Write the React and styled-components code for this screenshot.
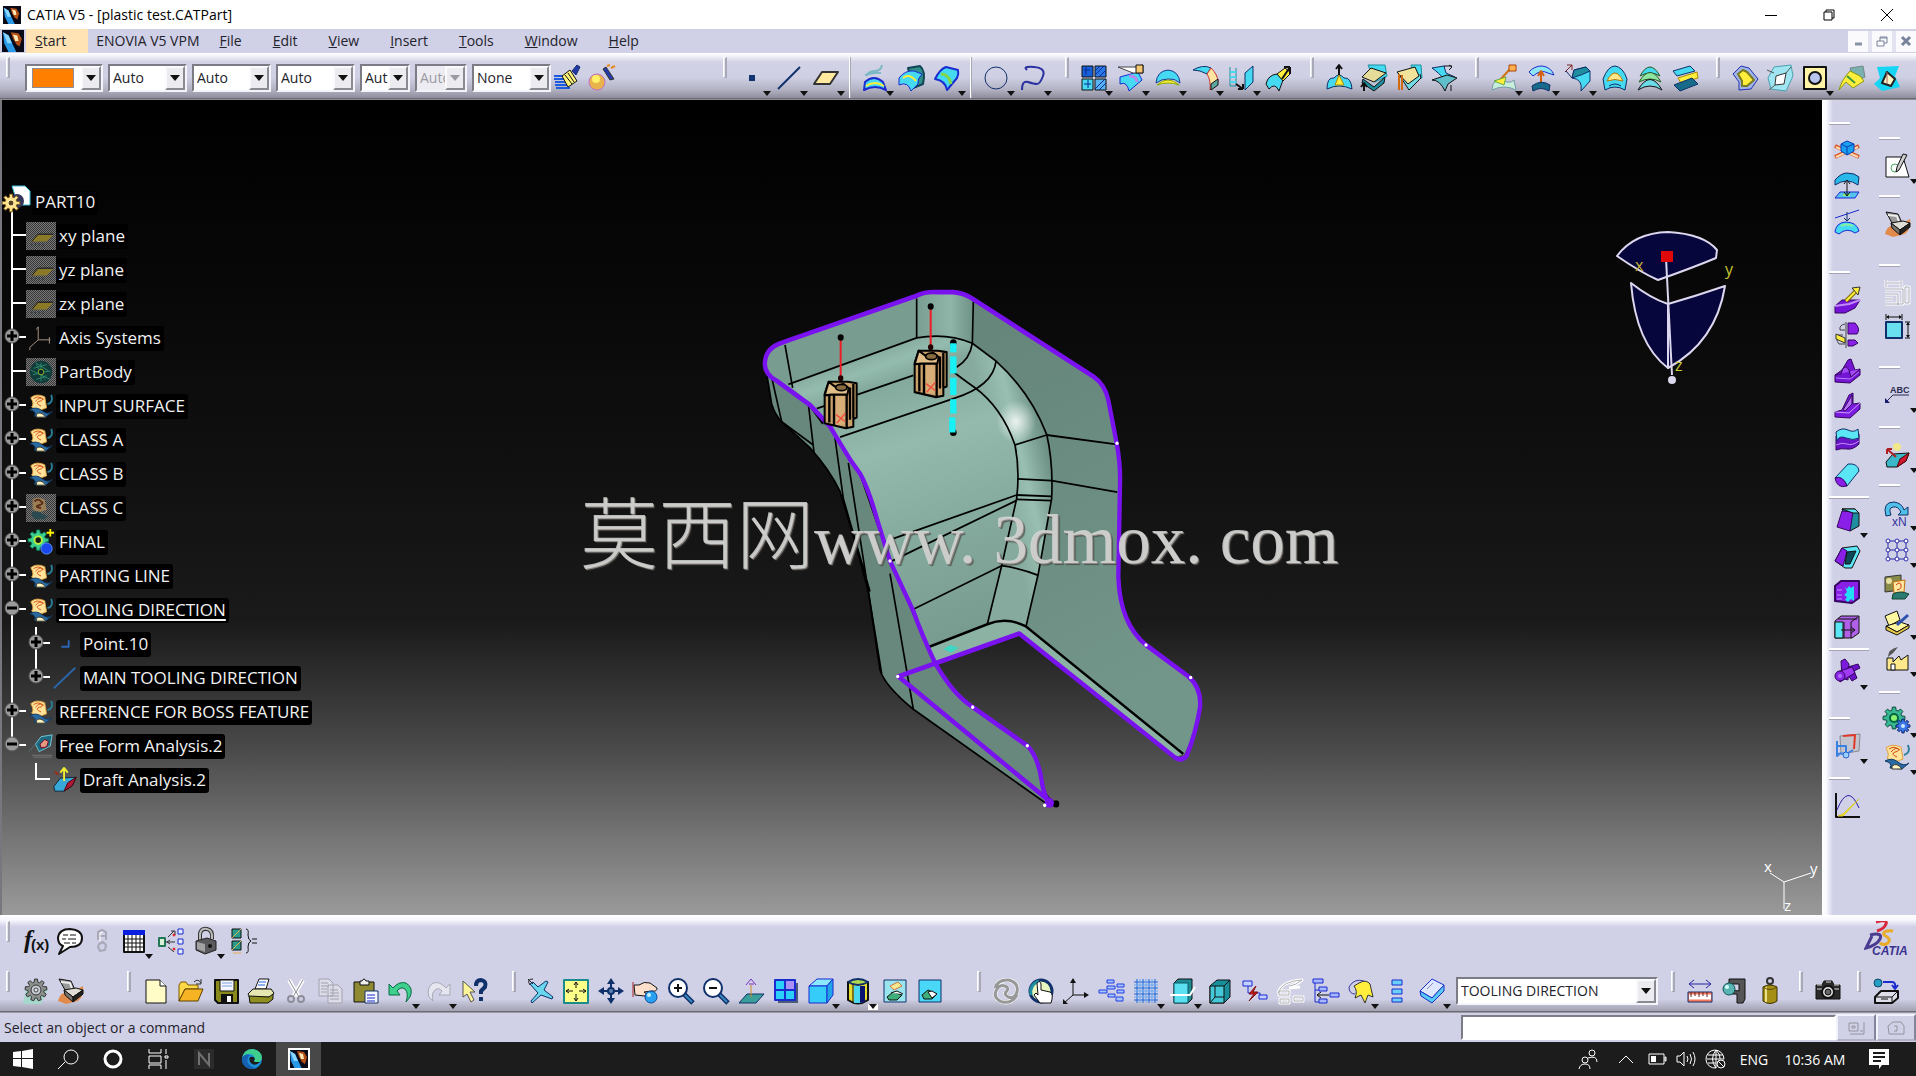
import React from "react";
import styled, { createGlobalStyle, css } from "styled-components";

const GlobalStyle = createGlobalStyle`
  *, *::before, *::after { box-sizing: border-box; }
  html, body { margin: 0; padding: 0; background: #1c1c1c; }
  body { font-family: "Open Sans", "Noto Sans", sans-serif; font-size: 14px; color: #23232b; overflow: hidden; }
  button, select, input { font: inherit; color: inherit; border-radius: 0; }
`;

const LAV = "#d0d0e7";

/* ---------- icon drawings: [path, fill, stroke, stroke width] on a 28 x 28 grid ---------- */
const c = (x, y, r) => `M${x - r} ${y}a${r} ${r} 0 1 0 ${2 * r} 0a${r} ${r} 0 1 0 ${-2 * r} 0Z`;
const r = (x, y, w, h) => `M${x} ${y}h${w}v${h}h${-w}Z`;
const gearPath = (cx, cy, outer, inner, teeth) => {
  const pts = [];
  for (let i = 0; i < teeth; i++) {
    [[-0.34, inner], [-0.2, outer], [0.2, outer], [0.34, inner]].forEach(([o, rad]) => {
      const a = ((i + o) / teeth) * Math.PI * 2;
      pts.push(`${(cx + Math.sin(a) * rad).toFixed(1)} ${(cy - Math.cos(a) * rad).toFixed(1)}`);
    });
  }
  return `M${pts.join("L")}Z`;
};
const N = "none";
const CY = "#45d9f2", BL = "#1a2bd0", NV = "#10306a", YE = "#ffee3c", PU = "#8a20e8", TE = "#1f8f9f", K = "#111111";

const geoset = [
  ["M3 5Q9 0 18 4L20 16Q10 21 4 15Q7 12 3 5Z", "#ffe39a", "#e0a040", 1],
  ["M6 6Q10 3 14 5Q18 8 12 9Q7 11 14 14M8 9Q13 3 17 7", N, "#d24a10", 1],
  ["M2 18Q9 14 15 19T26 20L19 26L7 25Q10 20 2 18Z", "#2b6aa0", "#123a66", 1],
  ["M9 23Q14 19 19 26L9 26Z", "#fff6c0", "#333", 1],
  ["M25 2Q28 10 21 12", N, "#2a7f9a", 2],
];

const ICONS = {
  brush: [["M1 12h10M1 15h11M2 18h12M2 21h14M3 24h14", N, "#1a5be0", 2], ["M9 12L17 6L24 17L15 23Z", "#fff37a", K, 1], ["M12 11L19 20M15 9L21 18", N, K, 1], ["M19 7L24 1L27 3L23 11Z", "#2438a8", NV, 1]],
  wizard: [[c(9, 18, 8), "#e9b34c", "#c070c8", 1], [c(8, 15, 4), "#fff06a"], ["M15 5L18 3L26 15L22 16Z", "#2438a8", "#333", 1], ["M19 2L22 1M23 4L27 2", N, "#e88820", 2]],
  point: [[r(11, 11, 6, 6), "#12356f"]],
  line: [["M3 25L25 3", N, NV, 2]],
  plane: [["M2 20L10 8H26L18 20Z", "#ffeaa0", "#333", 2]],
  extrude: [["M4 11Q14 8 20 9M21 1Q20 7 14 7T5 12", N, "#7ab8c4", 2], ["M4 18Q13 10 22 18L25 26Q14 20 3 26Z", CY, BL, 2], ["M5 22Q14 16 23 22", N, YE, 2]],
  offset: [["M10 4L22 2Q28 7 25 20L15 24Z", "#2f8f8a", "#145", 2], ["M1 14Q7 6 16 7L24 10Q19 15 20 20L13 27Q10 17 1 21Z", CY, BL, 1], ["M5 14Q11 9 18 17", N, YE, 2]],
  sweep: [["M2 15Q7 5 13 3L25 6Q26 10 24 14L14 26Q13 17 2 15Z", CY, BL, 2], ["M8 10Q16 10 18 20", N, "#7ed84a", 3]],
  circle: [[c(14, 14, 11), N, NV, 1]],
  spline: [["M3 26Q3 16 9 18T18 20T24 12T15 3T8 6", N, "#2a30a0", 2]],
  join: [[r(2, 2, 11, 11), "#1560d8", K, 1], [r(15, 2, 11, 11), "#2a78e8", K, 1], [r(2, 15, 11, 11), CY, K, 1], [r(15, 15, 11, 11), "#58b4f0", K, 1], ["M15 11L24 2M15 7L20 2M19 13L26 6M15 25L25 15M19 26L26 19M4 6h6M6 3v8M4 20h7M8 16v8", N, "#0a2a90", 1]],
  split: [["M3 13L21 8Q24 14 25 16L12 27Q10 17 3 20Z", CY, BL, 1], ["M12 12Q20 12 20 18", N, "#b58af0", 3], ["M1 3H18L26 1V9H16Z", "#fff", "#444", 1], [r(19, 1, 7, 8), "#f4c870", K, 1]],
  trim: [["M2 19Q3 7 14 6Q25 7 26 19Q21 14 14 15Q7 15 2 19Z", CY, "#1a3a90", 1], ["M3 21Q14 11 25 21Q14 17 3 21Z", YE, "#8a0", 1]],
  fillet: [["M2 6Q12 0 20 4L16 10Q9 6 2 6Z", CY, NV, 1], ["M16 10L20 4Q27 11 27 18L19 26Q20 16 16 10Z", "#ffe6a0", "#c33", 1], ["M20 26V20L27 15V21Z", "#5aa8a0", K, 1]],
  translate: [["M2 3V22H8V4", N, TE, 1], ["M2 8h6M2 13h6M2 18h6", N, CY, 2], ["M8 20L15 25M15 25v-5M15 25h-5", N, K, 2], ["M17 9L25 2V18L17 26Z", CY, NV, 1]],
  extrapol: [["M1 20Q3 11 12 10L18 16L14 27Q10 18 4 25Z", CY, K, 1], ["M12 10L20 4L26 9L18 17Z", YE, K, 1], ["M17 15L25 3M25 3v7M25 3h-6", N, K, 2]],
  bump: [["M2 25Q2 13 9 14Q14 8 19 14Q26 13 27 25Q14 19 2 25Z", CY, NV, 1], ["M10 21L14 11L19 21Z", YE, "#a80", 1], ["M14 11V2M11 5L14 1L17 5", N, K, 2]],
  wrapA: [["M8 1H25L27 12L15 18Z", CY, TE, 1], ["M3 15L14 23L25 13L24 19L14 27L2 19Z", TE, K, 1], ["M2 13L11 4L26 9L14 18Z", "#e6dc9a", K, 1], ["M4 27V20M1 23L4 19L7 23", N, K, 2]],
  wrapB: [["M16 1H26L27 14L18 15Z", CY, TE, 1], ["M3 9L14 26L26 14L25 10", "#73dbe6", K, 1], ["M2 8L20 3L24 12L13 20Z", "#f3e39a", K, 1], ["M4 26V10M7 26V11", N, "#d06a10", 2]],
  wrapC: [["M2 4L14 2L16 9L25 13L17 18Q8 8 2 4Z", CY, NV, 1], ["M2 16L17 11L27 14L18 20L15 27Q10 16 2 16Z", "#5fbfcb", K, 1], ["M14 2H22M19 1L22 3L19 6M21 21V27", N, K, 1]],
  devA: [["M10 16L20 5", N, "#d07010", 2], [r(19, 1, 7, 6), "#ffb050", "#a40", 1], ["M3 20Q8 14 14 17T24 16L26 26Q14 20 2 26Z", "#c6eeda", "#79a", 1], ["M4 17L16 13L14 21Z", YE, "#6a4", 1]],
  devB: [["M2 8Q7 2 15 2Q24 3 27 11L21 9Q14 5 6 12Z", "#8fe6f6", BL, 1], ["M14 20V8M11 12L14 7L17 12", N, "#d2600e", 2], ["M5 22Q14 15 23 21L22 27Q14 22 6 27Z", "#176a8a", NV, 1]],
  devC: [["M10 6L22 3L26 7V17L17 27Q19 15 8 14Z", CY, NV, 1], ["M10 6L22 3L26 7Q18 11 8 14Z", TE, NV, 1], ["M1 8L8 1M8 1v5M8 1h-5", N, "#7a2020", 1], ["M2 7L8 14", N, NV, 1]],
  devD: [["M2 15Q7 2 14 2Q22 3 26 15L24 26Q14 20 4 26Z", CY, NV, 1], ["M6 17Q14 1 22 17Q14 14 6 17Z", "#ffe68a", "#b70", 1], ["M8 22Q14 18 20 22", N, NV, 1]],
  devE: [["M4 12Q14 -6 24 12Q14 6 4 12Z", CY, "#255a20", 1], ["M3 18Q14 -1 25 18Q14 12 3 18Z", "#8fe6a0", "#255a20", 1], ["M2 26Q14 5 26 26Q14 18 2 26Z", "#6cdbe8", K, 1]],
  devF: [["M2 7L19 2L24 7L6 12Z", CY, NV, 1], ["M7 14L26 8L27 14L10 19Z", YE, "#a80", 1], ["M3 21L21 14L27 20L9 27Z", "#176a8a", NV, 1]],
  hiA: [["M2 10L10 2L18 4L27 15L20 25L8 26L8 18Z", "#9fb4e6", "#2430b0", 1], ["M7 10L12 6L16 8L23 16L16 22L11 22V17Z", YE, "#7a7a20", 2]],
  hiB: [["M8 3L25 1L27 12L20 27L5 25L2 14Z", "#9fe6f2", "#4aa0b0", 1], ["M10 12L20 9L18 20L9 21Z", "#fff", "#333", 1], ["M1 6L8 9M25 3L20 9M3 26L9 21", N, "#555", 1]],
  hiC: [[r(3, 3, 22, 22), "#fff3a8", K, 2], [c(14, 14, 6), "#b8c4ee", K, 2]],
  hiD: [["M12 4L25 2L27 13L16 18Z", "#7ab0b0", "#788", 1], ["M1 26Q4 15 12 7L22 12L26 17L15 24L8 18Z", YE, "#8a9a10", 1], ["M9 12L17 19", N, "#3a9a40", 2]],
  hiE: [["M4 3L26 2L22 12L27 23L9 27L1 20L7 14Z", "#15d5f4"], ["M14 8L22 15L18 22L9 19Z", "#fff6c8", "#222", 2], ["M14 8V20", N, "#a66", 1]],
  bubble: [["M14 2Q26 3 26 11Q26 20 14 20L3 27L7 19Q2 17 2 11Q3 2 14 2Z", "#fff", K, 2], ["M7 8h5M14 8h6M6 12h4M12 12h8M8 16h6M16 16h4", N, K, 1]],
  ghost8: [["M10 13V5L14 3L18 5V13M10 9H18M11 17L15 15L18 18L17 23L12 24L10 20Z", N, "#a9a9b8", 2], ["M12 14V6L15 5", N, "#fff", 1]],
  table: [[r(4, 4, 20, 21), "#fff", K, 2], [r(3, 3, 22, 5), "#0a1ee0"], ["M4 12H24M4 16H24M4 20H24M8 8V25M12 8V25M16 8V25M20 8V25", N, K, 1]],
  links: [[r(2, 11, 6, 8), "#d8f0d8", "#275", 2], ["M8 15H18M11 10L17 4M11 20L17 25M13 13L10 15L13 17M14 4h4v4", N, "#333", 1], [r(21, 2, 5, 5) + r(21, 12, 5, 5) + r(21, 22, 5, 5), "#e6ecff", BL, 1], [c(17, 8, 1) + c(17, 22, 1), "#e02020", "#e02020", 1]],
  lock: [["M8 13V7Q9 1 15 2Q21 3 20 12", N, "#333", 4], ["M8 13V7Q9 1 15 2Q21 3 20 12", N, "#bbb", 2], ["M4 14L15 11L24 14V23L13 27L4 23Z", "#59595e", "#222", 1], ["M5 15L13 17V25L5 22Z", "#a2a2a2"], [c(18, 19, 2), "#111"]],
  formula: [[r(3, 2, 9, 9) + r(3, 14, 9, 9), "#2a9a8a", K, 1], ["M3 11L12 2M3 23L12 14M4 26h8", N, "#e0b050", 1], ["M17 2Q20 2 19 8Q19 13 22 14Q19 15 19 20Q20 26 17 26", N, K, 1], ["M23 12h5M23 16h5", N, K, 1]],
  gear: [["M5 12H27L20 27H2Z", "#a7d8cc"], [gearPath(15, 13, 11, 8, 9), "#8c918f", "#333", 1], [c(15, 13, 5), "#c6ccd2", "#333", 1], [c(15, 13, 2), "#e6e6f0", "#444", 1]],
  sandwich: [["M2 24Q5 13 12 17L27 9Q29 18 22 24L10 27Z", "#e08a4c"], ["M3 2L15 4L20 15L9 13Z", "#999", K, 1], ["M5 5L14 6L16 12", N, "#eee", 2], ["M8 13L20 11L27 13L17 20Z", "#e0dcd6", K, 1], ["M8 13L17 20V25L9 18Z", "#77736e", K, 1], ["M17 20L27 13V17L17 25Z", "#222", K, 1]],
  newdoc: [["M4 3H18L24 9V26H4Z", "#fffcc8", K, 1], ["M18 3V9H24", "#fff", K, 1]],
  open: [["M2 8L4 5H9L11 8H21V12H8L2 24Z", "#ffd848", "#7a5a00", 1], ["M2 24L8 12H26L21 24Z", "#f6b424", "#5a4000", 1], ["M17 5Q21 1 24 6M24 2V7H19", N, "#333", 1]],
  save: [["M3 3H26V26H6L3 23Z", "#8a8a1c", K, 2], [r(8, 3, 14, 11), "#f4f6ff", K, 1], ["M10 6h10M10 9h10", N, "#7aa0e0", 1], [r(9, 17, 12, 9), K], [r(15, 19, 4, 6), "#fff"]],
  print: [["M8 12L12 2H22L19 12Z", "#fff", K, 1], ["M12 5h7M11 8h7", N, "#1a60e0", 1], ["M1 17L6 12H24L27 16L24 20L3 21Z", "#e6e6b0", K, 1], ["M2 19L22 20L26 17V22L21 26H3Z", "#8f8f22", K, 1]],
  cut: [["M7 3L17 20M21 3L11 20", N, "#fff", 4], ["M7 3L17 20M21 3L11 20", N, "#8e8e9a", 1], [c(9, 22, 3) + c(19, 22, 3), N, "#8e8e9a", 2]],
  copy: [["M2 2H12L16 6V19H2ZM11 8H21L25 12V26H11Z", "#dcdce8", "#a2a2b0", 1], ["M4 6h7M4 9h8M4 12h6M4 15h6M13 13h8M13 16h9M13 19h9M13 22h9", N, "#a2a2b0", 1]],
  paste: [[r(2, 5, 20, 20), "#8f8a32", K, 1], ["M8 8V4H10Q12 0 14 4H17V8Z", "#eee", K, 1], [r(13, 14, 13, 12), "#f6f8ff", NV, 1], ["M15 18h8M15 21h8M15 24h8", N, BL, 1]],
  undo: [["M2 18V7L6 11Q12 4 19 6Q27 11 23 20L19 25Q22 16 18 12Q14 9 10 14L13 18Z", "#3fd08e", "#0d6a46", 1]],
  redo: [["M26 18V7L22 11Q16 4 9 6Q2 11 5 20L9 24Q7 16 11 13Q15 10 18 14L15 18Z", "#e6e6f0", "#a9a9b6", 1]],
  help: [["M2 4L14 15H9L13 23L10 25L6 17L2 20Z", "#fff69a", "#555", 1], ["M15 9Q15 3 20 3Q26 4 24 10L20 14V17M20 20V24", N, NV, 4]],
  fly: [["M3 7L6 5L11 10L19 4L21 5L17 13L26 20L25 22L14 18L5 26L4 24L11 16Z", "#69d8ee", NV, 1], ["M3 8Q-1 2 6 2M1 2L6 7", N, "#222", 1]],
  fit: [[r(2, 3, 24, 23), "#fcff88", "#1a8a8a", 2], ["M14 5V11M14 17V24M4 14H11M17 14H24M12 8L14 5L16 8M12 21L14 24L16 21M7 12L4 14L7 16M21 12L24 14L21 16", N, K, 1]],
  pan: [["M14 3V25M3 14H25", N, NV, 2], ["M10 7L14 1L18 7ZM10 21L14 27L18 21ZM7 10L1 14L7 18ZM21 10L27 14L21 18Z", NV], [c(14, 14, 3), "#5a80b0", NV, 2]],
  rotate: [["M2 8H7Q12 4 18 6L25 11Q25 15 20 14L12 15Q17 18 13 19L3 18Z", "#fde0cc", K, 1], [c(19, 20, 6), "#2aa0f0", "#0a4a9a", 1], [c(17, 18, 2), "#c8f0ff"], ["M1 5V20", N, "#a22", 1]],
  zoomin: [["M16 16L26 26", N, NV, 5], ["M17 17L25 25", N, "#3a8ac0", 2], [c(11, 11, 9), "#fff", NV, 2], ["M11 7V15M7 11H15", N, K, 2]],
  zoomout: [["M16 16L26 26", N, NV, 5], ["M17 17L25 25", N, "#3a8ac0", 2], [c(11, 11, 9), "#fff", NV, 2], ["M7 11H15", N, K, 2]],
  normal: [["M2 26L10 17H27L19 26Z", "#3a9f9a", NV, 1], ["M14 20V8", N, "#d08a20", 1], ["M9 8L14 2L19 8M12 7h5", N, "#7a30c0", 1]],
  quad: [[r(6, 6, 20, 20), "#4a5a78"], [r(3, 3, 20, 20), "#2ad0f8", BL, 2], ["M13 3V23M3 13H23", N, BL, 2], [r(14, 4, 8, 8), "#a890f4"]],
  cube: [["M2 9L10 2H26L20 9Z", "#8ae8ff", BL, 1], ["M2 9H20V26H2Z", "#36ccfa", BL, 1], ["M20 9L26 2V18L20 26Z", "#22a4e8", BL, 1]],
  cylinder: [["M4 5V23Q14 30 24 23V5Z", "#e8dc30", K, 2], ["M10 9H18V26H10Z", "#49d8f0"], ["M16 9H21V25L16 26Z", "#0a1470"], ["M4 5Q14 -1 24 5Q14 11 4 5Z", "#b0d850", NV, 2], ["M4 5V23M9 8V25", N, K, 1]],
  hideA: [[r(3, 3, 22, 22), "#9ae4ee", NV, 1], ["M6 20L12 15L21 18L16 23H8Z", "#3fae7a", K, 1], ["M9 9L17 5L21 9L13 13Z", "#f6e890", "#c74", 1], ["M10 16L16 14L22 17", "#fff", K, 1]],
  hideB: [[r(3, 3, 22, 22), "#4ad8f8", NV, 1], ["M6 18L12 13L21 17L16 22H8Z", "#3fae7a", K, 1], ["M12 15L16 14L21 17L16 21Z", "#fff", K, 1]],
  swirl: [["M3 11Q6 2 17 3Q27 6 25 15Q23 22 16 20Q11 17 15 14M25 18Q20 27 10 25Q1 21 4 14Q7 7 13 9Q18 11 14 15", N, "#fff", 4], ["M3 11Q6 2 17 3Q27 6 25 15Q23 22 16 20Q11 17 15 14M25 18Q20 27 10 25Q1 21 4 14Q7 7 13 9Q18 11 14 15", N, "#989898", 3]],
  manual: [[c(14, 14, 11), "#e8f6c0", NV, 3], ["M4 18Q2 8 12 4", N, TE, 3], ["M10 6Q13 3 14 7V13L23 15Q27 17 24 26H13L7 18L9 16L11 18Z", "#fff", K, 1]],
  axis: [["M11 18V3M11 18H25M11 18L2 26", N, K, 1], ["M8 6L11 1L14 6ZM22 15L27 18L22 21ZM1 22L1 27L6 27Z", K]],
  boxes: [[r(2, 13, 8, 3) + r(10, 3, 7, 3) + r(10, 9, 8, 3) + r(11, 17, 7, 3) + r(20, 7, 7, 3) + r(20, 13, 7, 3) + r(19, 20, 7, 4), "#a8c4ff", "#1e3ee0", 1]],
  grid: [["M2 5H26M2 11H26M2 17H26M2 23H26M5 2V26M11 2V26M17 2V26M23 2V26", N, "#1a66d8", 1], ["M2 8H26M2 14H26M2 20H26M8 2V26M14 2V26M20 2V26", N, "#68a8f0", 1]],
  cutpart: [["M5 6L9 2H23V22L19 26H5Z", "#1d8a94", K, 1], [r(5, 6, 14, 20), "#5ae0f0", "#0a5a66", 1], ["M1 18H21L26 10", N, "#fff", 2]],
  cubeB: [["M4 9L11 3H24V20L18 26H4Z", "#1a8f9c", K, 1], [r(4, 9, 14, 17), "#45c8d8", K, 1], ["M9 9V20H18M9 20L4 26", N, K, 1], ["M18 9L24 3", N, K, 1]],
  linkcut: [["M7 9V16H19V19", N, BL, 1], [r(2, 4, 9, 5) + r(18, 18, 8, 4), "#c4d0ff", BL, 1], ["M15 9L8 17H13L8 24L17 15H12Z", "#c81818", "#801010", 1]],
  ghostlist: [["M2 16Q6 4 26 3Q20 8 14 9M3 14H13V18H3ZM4 22H13V26H4ZM18 20H27V24H18ZM13 11L24 10", N, "#fff", 3], ["M2 16Q6 4 26 3Q20 8 14 9M3 14H13V18H3ZM4 22H13V26H4ZM18 20H27V24H18Z", N, "#b0b0b4", 1]],
  treeicon: [["M4 5V25H8M4 13H10", N, BL, 1], [r(2, 2, 10, 4) + r(8, 10, 8, 4) + r(8, 22, 8, 4) + r(19, 16, 9, 4), "#a8b8ff", BL, 1], ["M6 18H18M10 15L6 18L10 21", N, K, 1]],
  star: [["M3 10Q8 1 18 4", N, "#3838a0", 1], ["M3 10Q3 17 9 17", N, "#3838a0", 1], ["M8 9L13 6Q20 2 24 7L27 20L22 18L19 26L15 18L9 21Q12 14 8 9Z", YE, "#333", 1]],
  stack: [[r(9, 3, 10, 5) + r(9, 12, 10, 5) + r(9, 21, 10, 4), "#6ad0f8", BL, 1]],
  layer: [["M2 14L14 2L26 8L14 21Z", "#dfe6ff", "#1a30c8", 1], ["M2 14L14 21L26 8V14L14 26L3 19Z", "#58c8f4", "#1a30c8", 1], ["M9 12L15 6", N, "#88a", 1]],
  ruler: [["M4 7H24M8 3L3 7L8 11M20 3L25 7L20 11", N, "#2424a0", 1], [r(2, 15, 24, 10), "#f87a5a", NV, 1], ["M3 20H25", N, "#fff", 5], ["M5 15V20M9 15V19M13 15V20M17 15V19M21 15V20", N, "#602020", 1]],
  caliper: [["M8 2H24V22L22 26H16V17H9V13L18 14V7H8Z", "#555", K, 1], [c(8, 12, 6), "#5ab4b4", "#155", 1], [c(6, 10, 2), "#d6fff8"]],
  weight: [[c(14, 4, 3), N, "#333", 2], ["M7 10Q14 6 21 10V24Q14 29 7 24Z", "#a58f14", "#3a3000", 1], ["M10 10V25", N, "#ece088", 2], ["M7 10Q14 15 21 10", N, "#5a4a00", 1]],
  camera: [["M2 8H8L10 4H18L20 8H26V22H2Z", "#2a2a2a", K, 1], ["M3 12h6M19 12h6M3 8h5M20 8h5M12 5h5", N, "#ddd", 1], [c(14, 15, 6), "#ddd", K, 2], [c(14, 15, 3), "#666", K, 1]],
  catalogue: [[c(6, 6, 4), "#25a0c4", "#146", 1], ["M11 5H20Q24 5 23 11M20 8L23 12L26 8", N, BL, 2], ["M3 20L9 14H26V21L20 26H3Z", "#dedeea", K, 2], ["M3 20H20V26M20 20L26 14M9 22h7", N, K, 1]],
  // right-hand panel
  mechA: [["M2 9L26 20M26 9L2 20", N, "#d85020", 4], ["M3 10L25 20M25 10L3 20", N, "#ffd9b0", 2], ["M8 7L14 4L21 7V14L14 18L8 14Z", "#1aa0f0", "#0a3ab0", 1], ["M8 7L14 10L21 7M14 10V18", N, "#0a3ab0", 1]],
  mechB: [["M2 8Q8 1 14 1Q22 1 26 5L25 13Q14 5 2 13Z", "#29b8ea", NV, 1], ["M2 26L7 20H26L22 26Z", "#54c4ee", BL, 1], [r(10, 22, 7, 2), "#8af070"], ["M14 23V10M11 12L14 8L17 12M11 20L14 24L17 20", N, K, 1]],
  mechC: [["M2 11L26 3", N, BL, 1], ["M14 5V13M11 11L14 14L17 11", N, NV, 1], ["M2 25Q3 16 12 15Q24 15 26 24L22 26Q14 20 6 27Z", CY, BL, 1], ["M8 19Q14 16 20 19", N, "#8af0a0", 2]],
  pad: [["M2 20L9 14H27L22 22L12 27H2Z", "#7512d8", "#35065f", 1], ["M2 20L16 18L27 14", N, "#c08af8", 2], ["M13 15L23 5", N, "#7a6a00", 4], ["M13 15L23 5", N, YE, 2], ["M19 2L27 1L25 9Z", YE, "#333", 1]],
  shaft: [["M15 2H22Q28 8 24 13H15ZM15 19H22L25 22L20 25H15Z", PU, "#35065f", 1], ["M12 3Q6 4 7 9H12M10 14H5Q2 18 6 23H12M13 1V27", N, "#444", 1], ["M3 13L12 17V22L3 18Z", YE, "#333", 1]],
  rib: [["M2 19L9 14L15 4L18 3L22 14L27 13V19L17 27L2 26Z", "#7414d4", "#35065f", 1], ["M2 19L8 18Q11 6 16 14L18 21L27 13", "#a24af4", "#35065f", 1], ["M3 22L17 23L26 16", N, "#b880ff", 1]],
  stiff: [["M2 21L9 19L16 4L20 2V13L27 12V18L17 27L2 26Z", "#7a1ade", "#35065f", 1], ["M10 19L19 4V13L12 20Z", "#b570f6", "#35065f", 1], ["M2 21L16 22L27 12", N, "#c89aff", 1]],
  thick: [["M3 10Q8 6 14 9T26 8V18Q20 24 14 23T3 24Z", "#6a14c8", "#35065f", 1], ["M3 6Q9 1 15 4T25 3L26 12Q20 15 13 12T4 15Z", "#5ae6f4", NV, 1], ["M3 19Q9 16 14 18T26 15", N, "#c090ff", 1]],
  thickB: [["M2 17L15 3Q25 2 26 10L14 25Q12 17 2 17Z", "#5ae6f4", NV, 1], ["M2 17Q10 14 14 25Q4 28 2 17Z", PU, "#35065f", 1]],
  draft: [["M9 3L22 3L26 7V20L17 25Z", TE, K, 1], ["M9 5L20 6L17 25L4 21Z", PU, "#35065f", 1], ["M9 3L22 3L26 7L20 7Z", "#5ae6f4", K, 1]],
  shell: [["M9 5L24 3L27 8L19 25H12L2 18Z", "#5ae6f4", K, 1], ["M2 18L9 5L14 8L10 23Z", PU, "#35065f", 1], ["M14 9L23 8L17 21H12Z", "#0c4a5a", K, 1]],
  thickC: [["M2 8L8 3H26V20L19 25L2 23Z", PU, "#35065f", 2], ["M12 9L14 11L16 8L18 10L21 8V23L18 21L15 24L12 22L14 19L11 17L14 14Z", "#20dff4"], ["M4 12h5M4 17h5M4 21h5", N, "#c090ff", 1]],
  replace: [["M2 8L8 3H26V20L19 25L2 25Z", "#b060e8", K, 1], [r(2, 9, 8, 16), "#5ae6f4", K, 1], ["M11 9V25M18 9V25M18 9L25 4M5 6H24", N, K, 1], ["M8 17H22M18 14L22 17L18 20", N, K, 1]],
  boolean: [["M8 3L12 1L16 6L15 22L9 20Z", "#7d1ae0", "#35065f", 1], ["M15 9L25 6L27 10L21 13L24 20L19 23L15 17Z", "#6a12c8", "#35065f", 1], ["M4 14L19 9L22 15L7 24Z", "#a03af4", "#35065f", 1], [c(7, 18, 5), "#8b26e6", "#35065f", 1], [c(7, 18, 2), "#b070ff"]],
  section: [["M7 4L27 2L26 19L8 22Z", "#c4c4cf", "#8a8a96", 1], ["M10 4L22 3L21 17", N, "#e03828", 2], ["M4 9V24L8 21M4 14H13V25M4 22L15 21L20 18", N, "#3a80e0", 2], [c(13, 23, 3), "#9ad0ff", "#2a60d0", 1]],
  chart: [["M3 1V25H27", N, K, 2], ["M4 18Q15 -10 26 16", N, "#2a20a8", 1], ["M5 24L10 22L26 7L10 24Z", YE, "#d8c820", 1]],
  sketch: [["M3 5H20L26 25H3Z", "#fff", K, 1], [c(12, 16, 4), N, "#4aa86a", 1], ["M20 2L24 3L16 18L13 20L14 15Z", "#ccc", K, 1]],
  ghostdim: [["M3 1V8M18 1V8M4 4H17M2 10H20V25H2M2 15H15V26M2 20H10M22 8V24H26V8Z", N, "#fff", 3], ["M3 1V8M18 1V8M4 4H17M2 10H20V25H2M2 15H15V26M2 20H10M22 8V24H26V8Z", N, "#a9a9b6", 1]],
  dim: [["M3 0V6M19 0V6M4 3H18M22 8H27M22 24H27M25 9V23", N, K, 1], [r(3, 8, 16, 16), "#6adff0", NV, 2], ["M3 3L6 1V5ZM19 3L16 1V5ZM25 8L23 11H27ZM25 24L23 21H27Z", K]],
  abc: [["M4 20L10 14H26", N, "#2a2a50", 1], ["M2 17L2 22L7 22Z", "#1a1a70"]],
  draftan: [["M3 21L10 13L26 12L23 20L14 26H4Z", "#38b8c8", K, 1], ["M14 26L17 18L26 12L23 20Z", "#d01830", "#500", 1], ["M13 16L4 8M4 8v5M4 8h5", N, "#b02020", 2], [c(14, 6, 4), "#f0e88a"]],
  repeat: [["M3 17Q-1 3 11 3Q19 4 21 11L25 8V16H15L18 13Q15 7 10 8Q5 9 8 16Z", "#4fc0e8", NV, 1]],
  dots: [["M5 5H23V23H5ZM5 14H23M14 5V23", N, "#2a2aa8", 1], [[5, 14, 23].map((x) => [5, 14, 23].map((y) => c(x, y, 2)).join("")).join(""), "#fff", "#2a2aa8", 1]],
  geoA: [["M2 4L18 2V17L2 19Z", "#8a8a4a", "#333", 1], [c(6, 8, 3), "#e8e0a0"], ["M10 9L22 7L21 19L11 20Z", "#ffe6a0", "#c07010", 1], ["M13 12Q17 8 18 12T14 17", N, "#d03a10", 1], ["M10 21Q17 17 26 21L22 26H9Z", "#2a7a70", "#143", 1]],
  draw: [["M2 8L14 3L17 12L6 18Z", "#fff6a0", K, 1], ["M3 18L17 14L26 17L14 24Z", "#fff6a0", K, 1], ["M3 18V22L14 27L26 20V17L14 24Z", "#e8c84a", K, 1], ["M14 17L25 7", N, "#2a50b0", 3]],
  factory: [["M4 25V13H10V17L16 11L18 15L25 10V25Z", "#ffe88a", K, 1], ["M5 12Q5 4 15 2Q11 8 5 12Z", "#555"], [r(8, 19, 4, 6), "#fff", K, 1]],
  gears: [[gearPath(11, 12, 11, 8, 8), "#38b890", "#0a4a40", 1], [c(11, 12, 4), "#8af470", "#064", 2], [gearPath(20, 20, 7, 5, 8), "#3a78e8", "#0a2070", 1], [c(20, 20, 2), "#cfe6ff"]],
  geoset,
  // tree
  treePlane: [["M3 20L10 13H27L20 20Z", "#8a7a28"], ["M4 20L11 12H27", N, "#111", 1], ["M4 22V25M8 22V25M12 22V25M16 22V25", N, "#2e3a44", 1]],
  treeAxis: [["M11 16V2L9 5M11 16H24M23 13V20M11 16L2 24V27", N, "#b09a8a", 1]],
  treeBody: [[c(14, 14, 12), "#123c3c"], ["M6 10L20 6M5 17L22 13M9 22L20 18M14 4V24M9 6L18 22M3 12L24 22M8 4L24 14", N, "#2f8a6a", 1], [c(14, 14, 3), "#0d2424", "#8ab02a", 1]],
  treeClassC: [["M5 5Q10 1 18 5L20 16Q10 21 5 15Z", "#9a7f56"], ["M7 7Q11 3 14 7Q18 9 12 11T14 14", N, "#5a2a18", 2], ["M3 20Q9 15 15 20T25 19L18 26H7Z", "#2a4a50"]],
  treeFinal: [[gearPath(11, 12, 11, 8, 8), "#3ccf8e", "#0a7a5a", 1], [c(11, 12, 4), "#181818", "#baf23a", 2], [c(20, 21, 6), "#1a48ec", "#5a9aff", 1], ["M24 0V8M20 4H28", N, "#fff200", 2]],
  treePoint: [["M10 17H18V10", N, "#2a66b8", 2]],
  treeLine: [["M2 25L25 3", N, "#2a66a8", 2]],
  treeFree: [["M8 12L14 4L26 2L24 14L12 20Z", "#1c6a80", "#7ac8d8", 1], ["M13 12L18 7L22 9L20 15L14 16Z", "#e89a80", "#702", 1], ["M1 20L8 12", N, "#57707a", 1], ["M4 24h22M6 26h20", N, "#777", 1]],
  treeDraft: [["M2 21L9 12L26 11L22 20L13 26H3Z", "#38a8d8", "#123", 1], ["M13 26L17 17L26 11L22 20Z", "#b01838", "#400", 1], ["M13 15V3M9 6L13 1L17 6", N, "#f2ee30", 2], ["M3 5L7 8", N, "#a02a10", 2]],
};

const Drawing = styled.svg`
  display: block;
  flex: none;
  overflow: visible;
`;

function Icon({ name, size = 28, children }) {
  return (
    <Drawing width={size} height={size} viewBox="0 0 28 28" aria-hidden="true" strokeLinejoin="round">
      {(ICONS[name] || []).map(([d, fill, stroke, w], i) => (
        <path key={i} d={d} fill={fill} stroke={stroke || "none"} strokeWidth={w || 0} />
      ))}
      {children}
    </Drawing>
  );
}

const IconText = styled.text`
  font-family: ${(p) => (p.$serif ? '"Liberation Serif", serif' : '"Liberation Sans", sans-serif')};
  font-size: ${(p) => p.$size}px;
  font-weight: ${(p) => (p.$bold ? 700 : 400)};
  font-style: ${(p) => (p.$italic ? "italic" : "normal")};
  fill: ${(p) => p.$color};
`;

/* ---------- frame ---------- */
const Window = styled.div`
  display: flex;
  flex-direction: column;
  height: 100vh;
  background: ${LAV};
`;

const TitleBar = styled.header`
  display: flex;
  align-items: center;
  height: 29px;
  padding-left: 3px;
  background: #fff;
  color: #000;
`;
const Title = styled.h1`
  flex: 1;
  margin: 0 0 0 6px;
  font-size: 14px;
  font-weight: 400;
  line-height: 28px;
`;
const CaptionButton = styled.button`
  display: grid;
  place-items: center;
  width: 58px;
  height: 28px;
  padding: 0;
  border: 0;
  background: none;
`;

const MenuBar = styled.nav`
  display: flex;
  align-items: center;
  height: 24px;
  padding-left: 2px;
  background: ${LAV};
`;
const MenuItem = styled.button`
  height: 24px;
  padding: 0 15px 0 16px;
  border: 0;
  background: none;
  line-height: 22px;
  ${(p) =>
    p.$active &&
    css`
      margin: 0 -8px 0 2px;
      padding: 0 22px 0 9px;
      background: #ffe3b5;
    `}
  ${(p) =>
    p.$tight &&
    css`
      padding-right: 4px;
    `}
`;
const MdiButtons = styled.div`
  display: flex;
  gap: 4px;
  margin-left: auto;
  background: #e2e2f0;
`;
const MdiButton = styled.button`
  display: grid;
  place-items: center;
  width: 20px;
  height: 21px;
  padding: 0;
  border: 0;
  background: #fafafd;
`;

/* ---------- toolbars ---------- */
const TopBar = styled.div`
  display: flex;
  align-items: center;
  height: 45px;
  padding: 4px 8px 0 0;
  background: linear-gradient(#ffffff 0, #f2f2fa 3px, #d2d2e6 9px, #d0d0e4 24px, #b4b4c6 36px, #8e8e9c 45px);
`;
const Rule = styled.div`
  height: 2px;
  flex: none;
  background: linear-gradient(#6c6c76 50%, ${(p) => p.$end} 50%);
`;
const Spacer = styled.div`
  flex: 1;
`;
const Group = styled.div`
  display: flex;
  align-items: center;
  align-self: stretch;
  padding-right: ${(p) => p.$after || 0}px;
`;
const Grip = styled.span`
  flex: none;
  align-self: flex-start;
  width: 4px;
  height: 21px;
  margin: ${(p) => p.$top || 0}px 11px 0 6px;
  border: 1px solid #fff;
  border-right: 2px solid #a8a8b6;
  border-bottom-color: #a8a8b6;
  background: #e6e6f2;
`;
const Divider = styled.span`
  flex: none;
  align-self: stretch;
  width: 2px;
  margin-right: 10px;
  background: linear-gradient(90deg, #fff 50%, #a8a8b6 50%);
`;
const ToolButton = styled.button`
  position: relative;
  flex: none;
  width: ${(p) => (p.$arrow ? 37 : p.$slim ? 32 : 35)}px;
  height: 28px;
  padding: 0;
  border: 0;
  background: none;
  ${(p) =>
    p.$vertical &&
    css`
      width: 38px;
      height: ${p.$arrow ? 37 : 35}px;
      margin-left: 4px;
      display: flex;
      align-items: flex-start;
    `}
`;
const Flyout = styled.svg`
  position: absolute;
  left: ${(p) => (p.$vertical ? 26 : 24)}px;
  top: 27px;
  background: ${(p) => (p.$lit ? "#fff" : "none")};
`;

function Tool({ name, label, arrow, slim, vertical, lit, children }) {
  return (
    <ToolButton type="button" aria-label={label || name} $arrow={arrow} $slim={slim} $vertical={vertical}>
      <Icon name={name}>{children}</Icon>
      {arrow && (
        <Flyout width="10" height="6" viewBox="0 0 10 6" $vertical={vertical} $lit={lit} aria-hidden="true">
          <path d="M1 0H9L5 5Z" fill="#111" />
        </Flyout>
      )}
    </ToolButton>
  );
}

const tools = (list, top, after) => (
  <Group $after={after}>
    <Grip $top={top} />
    {list.map((t) => (
      <Tool key={t} name={t.replace("+", "")} arrow={t.endsWith("+")} />
    ))}
  </Group>
);

/* ---------- drop-downs ---------- */
const Combo = styled.label`
  display: grid;
  flex: none;
  width: ${(p) => p.$width}px;
  height: 28px;
  border: 2px solid;
  border-color: #7c7c86 #f4f4fa #f4f4fa #7c7c86;
  background: ${(p) => (p.$disabled ? "#ececf2" : "#fff")};
  overflow: hidden;
`;
const Picker = styled.select`
  grid-area: 1 / 1;
  min-width: 0;
  width: 100%;
  padding: 0 0 0 3px;
  border: 0;
  appearance: none;
  background: none;
  line-height: 20px;
  opacity: 1;
  color: ${(p) => (p.disabled ? "#9a9aa2" : "#23232b")};
`;
const DropMark = styled.span`
  grid-area: 1 / 1;
  justify-self: end;
  display: grid;
  place-items: center;
  width: 20px;
  border: 2px solid;
  border-color: #fafafc #8a8a92 #8a8a92 #fafafc;
  background: #ececf0;
  pointer-events: none;
`;
const Swatch = styled.span`
  grid-area: 1 / 1;
  align-self: center;
  width: 42px;
  height: 20px;
  margin-left: 5px;
  border: 1px solid #8e8e96;
  background: #ff8000;
  pointer-events: none;
`;
const Combos = styled.div`
  display: flex;
  gap: 5px;
  padding: 0 2px 0 4px;
`;

function DropDown({ label, value, width, disabled, swatch }) {
  return (
    <Combo $width={width} $disabled={disabled}>
      <Picker aria-label={label} disabled={disabled} defaultValue={value}>
        <option value={value}>{swatch ? "" : value}</option>
      </Picker>
      {swatch && <Swatch />}
      <DropMark>
        <svg width="10" height="6" viewBox="0 0 10 6" aria-hidden="true">
          <path d="M0 0H10L5 6Z" fill={disabled ? "#9a9aa2" : "#111"} />
        </svg>
      </DropMark>
    </Combo>
  );
}

/* ---------- work area ---------- */
const Main = styled.main`
  display: flex;
  flex: 1;
  min-height: 0;
  padding-left: 2px;
  background: #77777d;
`;
const Viewport = styled.section`
  position: relative;
  flex: 1;
  min-width: 0;
  overflow: hidden;
  background: linear-gradient(#000 0%, #070707 21%, #111 47%, #1a1a1a 64%, #2c2c2c 70%, #4b4b4b 80%, #6b6b6b 88%, #9a9a9a 100%);
`;
const SidePanel = styled.aside`
  display: flex;
  flex: none;
  width: 94px;
  padding-left: 7px;
  overflow: hidden;
  background: linear-gradient(90deg, #fff 0, #fafaff 4px, ${LAV} 11px);
`;
const SideColumn = styled.div`
  flex: none;
  width: 50px;
  padding-top: ${(p) => p.$top}px;
`;
const SideGroup = styled.div`
  padding-bottom: ${(p) => p.$after || 0}px;
`;
const SideGrip = styled.span`
  display: block;
  width: ${(p) => (p.$wide ? 40 : 21)}px;
  height: 3px;
  margin-bottom: ${(p) => (p.$wide ? 7 : 12)}px;
  background: linear-gradient(#fff 66%, #a4a4b4 66%);
`;

const sideTools = (list, after, wide) => (
  <SideGroup $after={after} key={list[0]}>
    <SideGrip $wide={wide} />
    {list.map((t) => {
      const name = t.replace("+", "");
      return (
        <Tool key={t} name={name} arrow={t.endsWith("+")} vertical>
          {name === "abc" && <IconText x="7" y="12" $size={9} $bold $color="#2a2a50">ABC</IconText>}
          {name === "repeat" && <IconText x="9" y="27" $size={12} $color="#33339a">xN</IconText>}
        </Tool>
      );
    })}
  </SideGroup>
);

/* ---------- specification tree ---------- */
const Tree = styled.ul`
  position: relative;
  margin: 0;
  padding: 85px 0 0;
  list-style: none;
  width: max-content;
`;
const TreeRow = styled.li`
  display: flex;
  align-items: center;
  height: 34px;
`;
const Toggle = styled.button`
  display: block;
  width: 24px;
  height: 34px;
  padding: 0;
  border: 0;
  background: none;
`;
const Rail = styled.span`
  display: block;
  width: 24px;
  height: 34px;
`;
const TreeIcon = styled.span`
  display: grid;
  place-items: center;
  width: 30px;
  height: 28px;
  ${(p) =>
    p.$dim &&
    css`
      background: repeating-conic-gradient(#787878 0 25%, #363636 0 50%) 0 0 / 2px 2px;
    `}
`;
const TreeLabel = styled.span`
  height: 25px;
  padding: 0 3px;
  border-radius: 3px;
  background: #000;
  color: #f2f2f2;
  font-size: 17px;
  line-height: 24px;
  text-decoration: ${(p) => (p.$current ? "underline" : "none")};
  text-decoration-thickness: 2px;
  text-underline-offset: 3px;
`;

function Branch({ up = true, down = true, stub = true, node }) {
  return (
    <Drawing width="24" height="34" viewBox="0 0 24 34" aria-hidden="true">
      {up && <path d="M10 0V17" stroke="#fff" strokeWidth="2" />}
      {down && <path d="M10 16V34" stroke="#fff" strokeWidth="2" />}
      {stub && <path d="M10 16H24" stroke="#fff" strokeWidth="2" />}
      {node && <circle cx="10" cy="15" r="7" fill="#9a9a9a" stroke="#5a5a5a" />}
      {node && <path d={node === "+" ? "M5 15H15M10 10V20" : "M5 15H15"} stroke="#000" strokeWidth="3" />}
    </Drawing>
  );
}

const TREE = [
  { text: "xy plane", icon: "treePlane", dim: true },
  { text: "yz plane", icon: "treePlane", dim: true },
  { text: "zx plane", icon: "treePlane", dim: true },
  { text: "Axis Systems", icon: "treeAxis", node: "+" },
  { text: "PartBody", icon: "treeBody", dim: true },
  { text: "INPUT SURFACE", icon: "geoset", node: "+" },
  { text: "CLASS A", icon: "geoset", node: "+" },
  { text: "CLASS B", icon: "geoset", node: "+" },
  { text: "CLASS C", icon: "treeClassC", node: "+", dim: true },
  { text: "FINAL", icon: "treeFinal", node: "+" },
  { text: "PARTING LINE", icon: "geoset", node: "+" },
  { text: "TOOLING DIRECTION", icon: "geoset", node: "-", current: true },
  { text: "Point.10", icon: "treePoint", node: "+", sub: true, rail: true, more: true },
  { text: "MAIN TOOLING DIRECTION", icon: "treeLine", node: "+", sub: true, rail: true },
  { text: "REFERENCE FOR BOSS FEATURE", icon: "geoset", node: "+" },
  { text: "Free Form Analysis.2", icon: "treeFree", node: "-", last: true },
  { text: "Draft Analysis.2", icon: "treeDraft", sub: true },
];

function SpecTree() {
  return (
    <Tree>
      <TreeRow>
        <Drawing width="30" height="34" viewBox="0 0 30 34" aria-hidden="true">
          <path d="M10 20V34" stroke="#fff" strokeWidth="2" />
          <path d="M10 1H23L28 6V20H16Z" fill="#fff" stroke="#3ab8d8" />
          <circle cx="15" cy="16" r="7" fill="#34345a" />
          <path d={gearPath(9, 18, 9, 6, 8)} fill="#ffe28a" stroke="#7a5a20" />
          <circle cx="9" cy="18" r="3" fill="#5a4020" stroke="#fff2b0" />
        </Drawing>
        <TreeLabel>PART10</TreeLabel>
      </TreeRow>
      {TREE.map((n) => (
        <TreeRow key={n.text}>
          {n.sub && <Rail>{n.rail && <Branch stub={false} />}</Rail>}
          {n.node ? (
            <Toggle type="button" aria-label={(n.node === "+" ? "Expand " : "Collapse ") + n.text}>
              <Branch node={n.node} down={n.sub ? !!n.more : !n.last} />
            </Toggle>
          ) : (
            <Rail>
              <Branch down={!n.sub} />
            </Rail>
          )}
          <TreeIcon $dim={n.dim}>
            <Icon name={n.icon} size={26} />
          </TreeIcon>
          <TreeLabel $current={n.current}>{n.text}</TreeLabel>
        </TreeRow>
      ))}
    </Tree>
  );
}

/* ---------- 3D scene ---------- */
const Part = styled.svg`
  position: absolute;
  left: calc(50% - 172px);
  top: 170px;
`;
const Compass = styled.svg`
  position: absolute;
  right: 82px;
  top: 120px;
`;
const AxisTriad = styled.svg`
  position: absolute;
  right: 0;
  bottom: 0;
`;
const SceneText = styled.text`
  font-family: "Open Sans", sans-serif;
  font-size: ${(p) => p.$size || 16}px;
  fill: ${(p) => p.$color};
`;
const Watermark = styled.p`
  position: absolute;
  left: calc(50% - 332px);
  top: 381px;
  display: flex;
  align-items: baseline;
  margin: 0;
  white-space: nowrap;
  font-family: "Liberation Serif", "Noto Sans CJK SC", serif;
  font-size: 69px;
  line-height: 96px;
  color: rgba(214, 216, 215, 0.86);
  text-shadow: 1px 1px 0 #8d8680, 2px 2px 1px rgba(60, 60, 60, 0.7);
  pointer-events: none;
`;
const Han = styled.span`
  font-family: "Noto Sans CJK SC", sans-serif;
  font-size: 78px;
  font-weight: 300;
  line-height: 96px;
`;

function Boss({ x, y }) {
  return (
    <g transform={`translate(${x} ${y})`} strokeLinejoin="round">
      <path d="M0 -180V-70" stroke="#ee1c24" strokeWidth="6" />
      <circle cx="0" cy="-186" r="9" fill="#000" />
      <circle cx="0" cy="-72" r="8" fill="#200" />
      <path d="M-48 -28L-36 -62H22L48 -58V38L38 42V64L16 68L-48 54Z" fill="#c9a06a" stroke="#000" strokeWidth="6" />
      <path d="M-36 -62L-16 -48L8 -56L24 -44L20 -26H-28L-48 -24Z" fill="#e2be88" stroke="#000" strokeWidth="6" />
      <ellipse cx="2" cy="-46" rx="17" ry="9" fill="#8a6a40" stroke="#000" strokeWidth="5" />
      <path d="M-34 -24V52M-20 -26V60M18 -26V66M28 -46V44M38 -56V40" stroke="#000" strokeWidth="7" />
      <path d="M-14 -22H12V58H-14Z" fill="#d8ae78" />
      <path d="M-14 30L14 50M14 26L-12 54" stroke="#f04a3a" strokeWidth="4" />
    </g>
  );
}

const RIM =
  "M585 1100Q545 1020 520 955L450 815L415 710Q385 610 360 570L330 530Q300 485 270 438L210 378L110 310Q70 290 75 255Q80 215 130 202L530 72Q555 60 590 62H640Q672 64 700 82L1060 298Q1095 320 1105 365L1130 485Q1142 545 1140 600L1135 860Q1140 990 1218 1050L1345 1138Q1385 1170 1380 1225Q1368 1295 1340 1360Q1325 1377 1305 1365L838 1018L475 1138L935 1492";
const LEG = "M585 1100Q640 1190 700 1225L862 1332Q895 1365 905 1430Q912 1480 935 1495";

function Model() {
  return (
    <Part width="480" height="560" viewBox="0 0 1440 1568" preserveAspectRatio="none" fill="none" role="img" aria-label="Part model">
      <defs>
        <linearGradient id="inner" x1="300" y1="300" x2="520" y2="1050" gradientUnits="userSpaceOnUse">
          <stop offset="0" stopColor="#7ea497" />
          <stop offset=".3" stopColor="#93baac" />
          <stop offset=".6" stopColor="#86ac9f" />
          <stop offset="1" stopColor="#799c90" />
        </linearGradient>
        <linearGradient id="wall" x1="750" y1="200" x2="1200" y2="1200" gradientUnits="userSpaceOnUse">
          <stop offset="0" stopColor="#66867b" />
          <stop offset="1" stopColor="#73968a" />
        </linearGradient>
        <linearGradient id="shelf" x1="300" y1="230" x2="340" y2="350" gradientUnits="userSpaceOnUse">
          <stop offset="0" stopColor="#7da094" />
          <stop offset=".6" stopColor="#94bcae" />
          <stop offset="1" stopColor="#83a99c" />
        </linearGradient>
        <linearGradient id="corner" x1="530" y1="0" x2="700" y2="0" gradientUnits="userSpaceOnUse">
          <stop offset="0" stopColor="#7a9e92" />
          <stop offset=".6" stopColor="#8fb5a8" />
          <stop offset="1" stopColor="#6e9185" />
        </linearGradient>
        <linearGradient id="band" x1="780" y1="600" x2="940" y2="560" gradientUnits="userSpaceOnUse">
          <stop offset="0" stopColor="#86ab9e" />
          <stop offset=".5" stopColor="#98bfb1" />
          <stop offset="1" stopColor="#6c8e83" />
        </linearGradient>
        <radialGradient id="glint" cx="828" cy="425" r="60" gradientUnits="userSpaceOnUse">
          <stop offset="0" stopColor="#fff" stopOpacity=".8" />
          <stop offset="1" stopColor="#fff" stopOpacity="0" />
        </radialGradient>
      </defs>

      {/* outer flange */}
      <path d="M80 290L95 375Q105 405 125 425L210 498Q270 560 300 620L345 760L385 900L420 1120Q435 1165 520 1230L925 1498L940 1488Q908 1470 905 1425Q895 1365 862 1332L700 1225Q640 1190 585 1100L450 815L360 570L270 438L210 378Z" fill="#68887d" stroke="#000" strokeWidth="5" />
      {/* inside skin */}
      <path d="M585 1095L520 955L450 815L415 710Q385 610 360 570L270 438L210 378L110 310Q70 290 75 255Q80 215 130 202L530 72Q555 60 590 62H640Q672 64 700 82L900 280L930 560L900 900L838 1018Z" fill="url(#inner)" />
      <path d="M110 310Q70 290 75 255Q80 215 130 202L530 72V190L145 320Z" fill="#789c90" />
      <path d="M145 320L530 190Q620 175 697 205Q690 250 640 285L520 295L230 388Z" fill="url(#shelf)" />
      <path d="M530 72Q555 60 590 62H640Q672 64 700 82L697 205Q620 175 530 190Z" fill="url(#corner)" />
      {/* right wall */}
      <path d="M700 82L1060 298Q1095 320 1105 365L1130 485Q1142 545 1140 600L1135 860Q1140 990 1218 1050L1345 1138Q1385 1170 1380 1225Q1368 1295 1330 1360L858 998L895 850L935 640Q940 540 920 460Q870 340 768 255L697 205Z" fill="url(#wall)" />
      {/* fillet */}
      <path d="M697 205L768 255Q870 340 920 460Q940 540 935 640L895 850L858 998Q800 970 742 992L785 828L830 640Q840 560 825 490Q785 385 705 330L640 285Q690 250 697 205Z" fill="url(#band)" />
      <circle cx="828" cy="425" r="60" fill="url(#glint)" />
      {/* lip */}
      <path d="M568 1055L742 992Q800 970 858 998L1330 1355L1305 1365L838 1018L585 1095Z" fill="#8cb2a4" />
      <path d="M610 1062l20-12l26 8l-22 14Z" fill="#3fd6c4" />

      <g stroke="#000" strokeWidth="5" strokeLinejoin="round">
        <path d="M135 210L158 330M145 320L530 190Q620 175 697 205L768 255Q870 340 920 460Q940 540 935 640L895 850L858 998" />
        <path d="M530 80V190M700 88L697 205Q690 250 650 272M230 388L520 295M640 285Q660 300 705 330Q785 385 825 490Q840 560 830 640L785 828L742 992" />
        <path d="M300 468L640 360Q760 325 768 255M825 490L920 462L1130 488M832 585L935 590L1132 622M830 630L935 634M830 642L935 646" />
        <path d="M445 757L830 630M455 815L830 645M520 950L785 828Q840 835 895 855" />
        <path d="M568 1055L742 992Q800 970 858 998L1330 1355" strokeWidth="7" />
        <path d="M205 375L222 510M285 470L310 640L390 900M325 540L385 900L425 1130M450 850L520 1230M125 425L220 490" />
        <path d="M95 300L125 425" />
      </g>
      <path d="M210 378L250 430" stroke="#000" strokeWidth="9" />
      <path d={RIM} stroke="#7a12f0" strokeWidth="13" strokeLinejoin="round" />
      <path d={LEG} stroke="#7a12f0" strokeWidth="13" strokeLinejoin="round" />
      <circle cx="948" cy="1495" r="10" fill="#000" />
      <circle cx="928" cy="1492" r="14" fill="#7a12f0" />
      <g fill="#fff">
        <circle cx="1131" cy="485" r="5" />
        <circle cx="1218" cy="1050" r="5" />
        <circle cx="1352" cy="1141" r="5" />
        <circle cx="698" cy="1224" r="5" />
        <circle cx="862" cy="1332" r="5" />
        <circle cx="473" cy="1138" r="5" />
        <circle cx="450" cy="815" r="5" />
        <circle cx="914" cy="1499" r="5" />
      </g>
      <circle cx="640" cy="204" r="10" fill="#000" />
      <circle cx="640" cy="455" r="10" fill="#000" />
      <path d="M640 205V230M640 242V290M640 302V350M640 362V402M637 412V455" stroke="#17f0f4" strokeWidth="19" />
      <Boss x={302} y={375} />
      <Boss x={572} y={288} />
    </Part>
  );
}

function Scene() {
  return (
    <Viewport>
      <SpecTree />
      <Model />
      <Compass width="140" height="170" viewBox="0 0 140 170" fill="none" role="img" aria-label="Compass">
        <g stroke="#dcd6ee" strokeWidth="2" strokeLinejoin="round">
          <path d="M17 36Q34 13 68 12Q104 14 117 30L116 38Q92 48 58 60Q40 52 17 36Z" fill="#06063c" />
          <path d="M31 63Q50 78 68 84V148Q36 124 31 63Z" fill="#06063c" />
          <path d="M125 66Q96 76 68 84V148Q116 122 125 66Z" fill="#06063c" />
          <path d="M66 38L72 155" />
        </g>
        <rect x="61" y="31" width="12" height="11" fill="#e00808" />
        <circle cx="72" cy="160" r="4" fill="#dcd6ee" />
        <SceneText x="35" y="51" $color="#c8b432">x</SceneText>
        <SceneText x="125" y="55" $color="#c8c832">y</SceneText>
        <SceneText x="75" y="151" $color="#c8c832">z</SceneText>
      </Compass>
      <AxisTriad width="64" height="72" viewBox="0 0 64 72" fill="none" aria-hidden="true">
        <path d="M26 39L12 30M26 39L53 30M26 39V66" stroke="#fff" strokeWidth="1" />
        <SceneText x="6" y="29" $color="#fff" $size={15}>x</SceneText>
        <SceneText x="52" y="31" $color="#fff" $size={15}>y</SceneText>
        <SceneText x="26" y="68" $color="#fff" $size={15}>z</SceneText>
      </AxisTriad>
      <Watermark>
        <Han>莫西网</Han>www. 3dmox. com
      </Watermark>
    </Viewport>
  );
}

/* ---------- lower bars ---------- */
const LowerBar = styled.div`
  position: relative;
  flex: none;
  background: linear-gradient(#fff 0, #f6f6fd 5px, ${LAV} 12px, ${LAV} 84px, #a2a2b2 96px);
`;
const LowerRow = styled.div`
  display: flex;
  align-items: center;
  height: ${(p) => (p.$second ? 46 : 50)}px;
  padding: ${(p) => (p.$second ? "6px 14px 0 0" : "2px 2px 0 0")};
`;
const Brand = styled.svg`
  flex: none;
`;
const StatusBar = styled.footer`
  display: flex;
  align-items: center;
  flex: none;
  height: 29px;
  padding-left: 4px;
  background: ${LAV};
`;
const StatusText = styled.output`
  flex: 1;
  line-height: 28px;
`;
const CommandInput = styled.input`
  width: 375px;
  height: 25px;
  border: 2px solid;
  border-color: #7c7c86 #fff #fff #7c7c86;
  background: #fff;
`;
const StatusButton = styled.button`
  display: grid;
  place-items: center;
  width: 40px;
  height: 27px;
  padding: 0;
  border: 2px solid;
  border-color: #f2f2fa #85859a #b4b4c6 #f2f2fa;
  background: ${LAV};
`;

const TaskBar = styled.nav`
  display: flex;
  align-items: stretch;
  flex: none;
  height: 34px;
  padding-right: 12px;
  background: #1c1c1c;
  color: #fff;
`;
const TaskButton = styled.button`
  display: grid;
  place-items: center;
  width: ${(p) => p.$width || 45}px;
  padding: 0;
  border: 0;
  color: #fff;
  background: ${(p) => (p.$active ? "#484848" : "none")};
  white-space: nowrap;
`;

function Nebula({ size, frame }) {
  return (
    <Drawing width={size} height={size} viewBox="0 0 20 20" aria-hidden="true">
      <rect width="20" height="20" fill="#080a18" />
      <path d="M1 2L6 5L13 20H6L2 12Z" fill="#2a9ae8" />
      <path d="M1 2L6 5L9 12L5 12Z" fill="#8ad8ff" />
      <path d="M8 2L15 3L18 8L16 15L13 13L10 8Z" fill="#b04e14" />
      <path d="M10 4L14 5L15 10L12 10Z" fill="#ffe8b8" />
      {frame && <rect width="20" height="20" fill="none" stroke="#fff" strokeWidth="2" />}
    </Drawing>
  );
}

const Line = ({ d, w = 22, h = 22, sw = 1, fill = "none", color = "#fff" }) => (
  <Drawing width={w} height={h} viewBox={`0 0 ${w} ${h}`} fill={fill} stroke={color} strokeWidth={sw} aria-hidden="true">
    <path d={d} />
  </Drawing>
);

const MENUS = [
  ["S", "tart"],
  ["", "ENOVIA V5 VPM"],
  ["F", "ile"],
  ["E", "dit"],
  ["V", "iew"],
  ["I", "nsert"],
  ["T", "ools"],
  ["W", "indow"],
  ["H", "elp"],
];

export default function App() {
  return (
    <Window>
      <GlobalStyle />
      <TitleBar>
        <Nebula size={18} />
        <Title>CATIA V5 - [plastic test.CATPart]</Title>
        <CaptionButton type="button" aria-label="Minimize">
          <Line w={12} h={12} d="M0 6.500H12" color="#000" />
        </CaptionButton>
        <CaptionButton type="button" aria-label="Restore">
          <Line w={12} h={12} d="M1 3H9V11H1ZM3 3V1H11V9H9" color="#000" />
        </CaptionButton>
        <CaptionButton type="button" aria-label="Close">
          <Line w={12} h={12} d="M0 0L12 12M12 0L0 12" color="#000" />
        </CaptionButton>
      </TitleBar>

      <MenuBar>
        <Nebula size={22} />
        {MENUS.map(([key, rest], i) => (
          <MenuItem key={rest} type="button" $active={i === 0} $tight={i === 1}>
            {key && <u>{key}</u>}
            {rest}
          </MenuItem>
        ))}
        <MdiButtons>
          <MdiButton type="button" aria-label="Minimize document"><Line w={12} h={12} d="M3 9H10" sw={3} color="#8792a4" /></MdiButton>
          <MdiButton type="button" aria-label="Restore document"><Line w={12} h={12} d="M1 6H8V11H1ZM4 6V2H11V8H8M4 3H11" sw={1} color="#76839a" /></MdiButton>
          <MdiButton type="button" aria-label="Close document"><Line w={12} h={12} d="M2 2L10 10M10 2L2 10" sw={3} color="#76839a" /></MdiButton>
        </MdiButtons>
      </MenuBar>

      <TopBar>
        <Group>
          <Grip />
          <Combos>
            <DropDown label="Fill color" value="orange" width={78} swatch />
            <DropDown label="Transparency" value="Auto" width={79} />
            <DropDown label="Line weight" value="Auto" width={79} />
            <DropDown label="Line type" value="Auto" width={79} />
            <DropDown label="Point symbol" value="Auto" width={50} />
            <DropDown label="Rendering style" value="Auto" width={52} disabled />
            <DropDown label="Layer" value="None" width={79} />
          </Combos>
          <Tool name="brush" label="Painter" />
          <Tool name="wizard" label="Properties wizard" />
        </Group>
        <Spacer />
        <Group $after={3}>
          <Grip />
          <Tool name="point" arrow />
          <Tool name="line" arrow />
          <Tool name="plane" arrow />
          <Divider />
          <Tool name="extrude" arrow />
          <Tool name="offset" />
          <Tool name="sweep" arrow />
          <Divider />
          <Tool name="circle" arrow />
          <Tool name="spline" arrow />
        </Group>
        {tools(["join+", "split+", "trim+", "fillet+", "translate+", "extrapol"], 0, 4)}
        {tools(["bump", "wrapA", "wrapB", "wrapC"], 0, 4)}
        {tools(["devA+", "devB+", "devC+", "devD", "devE", "devF"], 0, 4)}
        {tools(["hiA", "hiB", "hiC+", "hiD", "hiE"], 0, 0)}
      </TopBar>
      <Rule $end="#8c8c92" />

      <Main>
        <Scene />
        <SidePanel>
          <SideColumn $top={22}>
            {sideTools(["mechA", "mechB", "mechC"], 29)}
            {sideTools(["pad", "shaft", "rib", "stiff", "thick", "thickB"], 0)}
            {sideTools(["draft+", "shell", "thickC", "replace"], 0, true)}
            {sideTools(["boolean+"], 22, true)}
            {sideTools(["section+"], 8)}
            {sideTools(["chart"], 0)}
          </SideColumn>
          <SideColumn $top={37}>
            {sideTools(["sketch+"], 6)}
            {sideTools(["sandwich"], 19)}
            {sideTools(["ghostdim", "dim"], 17)}
            {sideTools(["abc+"], 8)}
            {sideTools(["draftan+"], 6)}
            {sideTools(["repeat+", "dots+", "geoA", "draw+", "factory+"], 9)}
            {sideTools(["gears+", "geoset+"], 0)}
          </SideColumn>
        </SidePanel>
      </Main>

      <LowerBar>
        <LowerRow>
          <Group>
            <Grip $top={4} />
            <Tool name="fx" label="Formula">
              <IconText x="3" y="21" $size={25} $serif $italic $bold $color="#111">f</IconText>
              <IconText x="10" y="23" $size={15} $bold $color="#111">(x)</IconText>
            </Tool>
            <Tool name="bubble" label="Comment" slim />
            <Tool name="ghost8" label="Check" slim />
            <Tool name="table" label="Design table" arrow />
            <Tool name="links" label="Relations" />
            <Tool name="lock" label="Lock parameters" arrow />
            <Tool name="formula" label="Equivalent dimensions" />
          </Group>
          <Spacer />
          <Brand width="50" height="40" viewBox="0 0 50 40" role="img" aria-label="CATIA">
            <path d="M12 1Q24 -2 22 3Q20 8 13 10" fill="none" stroke="#d8283c" strokeWidth="3" />
            <path d="M6 14Q19 11 16 18Q13 24 2 27L8 15" fill="none" stroke="#4a3c90" strokeWidth="3" />
            <path d="M29 10Q18 9 20 14Q28 18 24 22Q20 25 16 22" fill="none" stroke="#e8ac28" strokeWidth="3" />
            <IconText x="8" y="34" $size={12} $bold $italic $color="#3c3490">CATIA</IconText>
          </Brand>
        </LowerRow>
        <LowerRow $second>
          <Group $after={30}>
            <Grip />
            <Tool name="gear" label="Workbench" arrow={false} />
            <Tool name="sandwich" label="Core and cavity" />
          </Group>
          <Group $after={10}>
            <Grip />
            {["newdoc", "open", "save", "print", "cut", "copy", "paste"].map((n) => <Tool key={n} name={n} />)}
            <Tool name="undo" arrow />
            <Tool name="redo" arrow />
            <Tool name="help" />
          </Group>
          <Group $after={20}>
            <Grip />
            {["fly", "fit", "pan", "rotate", "zoomin", "zoomout", "normal", "quad"].map((n) => <Tool key={n} name={n} />)}
            <Tool name="cube" arrow />
            <Tool name="cylinder" arrow lit />
            <Tool name="hideA" />
            <Tool name="hideB" />
          </Group>
          <Group $after={1}>
            <Grip />
            {["swirl", "manual", "axis", "boxes", "grid+", "cutpart+", "cubeB", "linkcut", "ghostlist", "treeicon", "star+", "stack", "layer+"].map((n) => (
              <Tool key={n} name={n.replace("+", "")} arrow={n.endsWith("+")} />
            ))}
          </Group>
          <Group $after={7}>
            <DropDown label="Current body" value="TOOLING DIRECTION" width={202} />
          </Group>
          {tools(["ruler", "caliper", "weight"], 0, 2)}
          {tools(["camera"], 0, 2)}
          {tools(["catalogue"], 0, 0)}
        </LowerRow>
      </LowerBar>
      <Rule $end="#9a9aa6" />

      <StatusBar>
        <StatusText>Select an object or a command</StatusText>
        <CommandInput type="text" aria-label="Power input" />
        <StatusButton type="button" aria-label="Dialog">
          <Line w={20} h={16} d="M3 3H12V11H3ZM6 6H9V8H6ZM14 11H17M18 2V14H4" color="#94949f" />
        </StatusButton>
        <StatusButton type="button" aria-label="Information">
          <Line w={20} h={16} d="M3 13L2 6L7 2H15L18 6V14H3ZM8 6H11V11H8" color="#94949f" />
        </StatusButton>
      </StatusBar>

      <TaskBar>
        <TaskButton type="button" aria-label="Start">
          <Drawing width="20" height="20" viewBox="0 0 20 20" fill="#fff" aria-hidden="true">
            <path d="M0 3L8 2V9H0ZM9 2L20 0V9H9ZM0 10H8V18L0 17ZM9 10H20V20L9 18Z" />
          </Drawing>
        </TaskButton>
        <TaskButton type="button" aria-label="Search">
          <Line d="M1 21L8 14M7 9a7 7 0 1 0 14 0a7 7 0 1 0 -14 0Z" />
        </TaskButton>
        <TaskButton type="button" aria-label="Cortana">
          <Line d="M3 11a8 8 0 1 0 16 0a8 8 0 1 0 -16 0Z" sw={3} />
        </TaskButton>
        <TaskButton type="button" aria-label="Task view">
          <Line d="M2 1V5H14V1M2 8H14V15H2ZM2 21V17H14V21M19 1V6M19 12V21M18 8H21V10H18Z" />
        </TaskButton>
        <TaskButton type="button" aria-label="N" $width={48}>
          <Drawing width="20" height="20" viewBox="0 0 20 20" aria-hidden="true">
            <rect width="20" height="20" fill="#2b2b2b" />
            <path d="M5 16V4L15 16V4" fill="none" stroke="#707070" strokeWidth="2" />
          </Drawing>
        </TaskButton>
        <TaskButton type="button" aria-label="Edge" $width={48}>
          <Drawing width="20" height="20" viewBox="0 0 20 20" aria-hidden="true">
            <circle cx="10" cy="10" r="10" fill="#1a8ed8" />
            <path d="M0 9Q2 0 11 0Q20 2 20 9Q19 14 13 13Q11 12 13 10Q12 5 7 5Q2 5 0 9Z" fill="#3fcf8c" />
            <path d="M0 9Q3 4 8 6Q4 9 6 14Q9 19 15 19Q10 21 5 19Q-1 15 0 9Z" fill="#1560b0" />
            <path d="M8 8Q12 7 13 10Q11 12 13 13L18 13Q14 17 10 15Q6 12 8 8Z" fill="#1c1c1c" />
          </Drawing>
        </TaskButton>
        <TaskButton type="button" aria-label="CATIA" $active>
          <Nebula size={20} frame />
        </TaskButton>
        <Spacer />
        <TaskButton type="button" aria-label="People" $width={44}>
          <Line w={20} h={20} d="M4 11a3 3 0 1 0 6 0a3 3 0 1 0 -6 0M11 4a3 3 0 1 0 6 0a3 3 0 1 0 -6 0M1 20Q2 15 7 15T12 20M10 9Q19 6 19 13" sw={1} />
        </TaskButton>
        <TaskButton type="button" aria-label="Show hidden icons" $width={32}>
          <Line w={16} h={10} d="M1 9L8 2L15 9" sw={1} />
        </TaskButton>
        <TaskButton type="button" aria-label="Battery" $width={30}>
          <Drawing width="19" height="12" viewBox="0 0 19 12" aria-hidden="true">
            <path d="M1 1H16V11H1ZM17 4H18V8H17Z" fill="none" stroke="#fff" />
            <path d="M3 3H8V9H3Z" fill="#fff" />
          </Drawing>
        </TaskButton>
        <TaskButton type="button" aria-label="Volume" $width={28}>
          <Line w={20} h={18} d="M1 6H4L8 2V16L4 12H1ZM11 6Q13 9 11 12M14 4Q17 9 14 14M17 2Q21 9 17 16" />
        </TaskButton>
        <TaskButton type="button" aria-label="Network" $width={32}>
          <Line w={20} h={20} d="M18 10A9 9 0 1 0 10 19M1 10H18M10 1V19M10 1Q3 10 10 19M10 1Q15 6 14 10M2 6H17M2 14H10M11 15a4 4 0 1 0 8 0a4 4 0 1 0 -8 0M12 12L18 18" />
        </TaskButton>
        <TaskButton type="button" $width={44}>ENG</TaskButton>
        <TaskButton type="button" $width={78}>10:36 AM</TaskButton>
        <TaskButton type="button" aria-label="Notifications" $width={50}>
          <Drawing width="20" height="20" viewBox="0 0 20 20" aria-hidden="true">
            <path d="M0 0H20V16H13L10 20V16H0Z" fill="#fff" />
            <path d="M4 4H16M4 8H16M4 12H12" stroke="#1c1c1c" strokeWidth="2" />
          </Drawing>
        </TaskButton>
      </TaskBar>
    </Window>
  );
}
